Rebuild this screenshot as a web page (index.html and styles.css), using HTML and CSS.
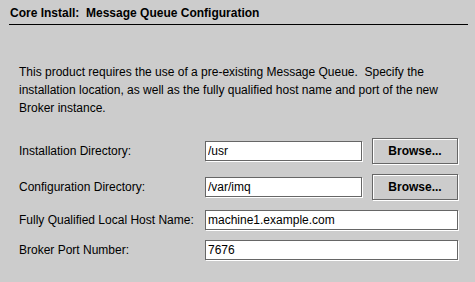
FILE: index.html
```html
<!DOCTYPE html>
<html lang="en">
<head>
  <meta charset="UTF-8" />
  <title>Core Install: Message Queue Configuration</title>
  <link rel="stylesheet" href="styles.css">
</head>
<body>
  <div class="panel">
    <h2 class="panel-title">Core Install:&nbsp; Message Queue Configuration</h2>

    <p class="intro">This product requires the use of a pre-existing Message Queue.&nbsp; Specify the installation location, as well as the fully qualified host name and port of the new Broker instance.</p>

    <div class="form">
      <label class="field-label" for="install-dir">Installation Directory:</label>
      <input class="field" type="text" id="install-dir" value="/usr" />
      <button class="browse">Browse...</button>

      <label class="field-label" for="config-dir">Configuration Directory:</label>
      <input class="field" type="text" id="config-dir" value="/var/imq" />
      <button class="browse">Browse...</button>

      <label class="field-label" for="host-name">Fully Qualified Local Host Name:</label>
      <input class="field wide" type="text" id="host-name" value="machine1.example.com" />

      <label class="field-label" for="broker-port">Broker Port Number:</label>
      <input class="field wide" type="text" id="broker-port" value="7676" />
    </div>
  </div>
</body>
</html>
```

FILE: styles.css
```css
body {
  margin: 0;
  background: #cccccc;
  font-family: 'Liberation Sans', Arial, sans-serif;
  font-size: 12px;
  color: #000;
}
.panel {
  width: 475px;
  height: 282px;
  overflow: hidden;
}
.panel-title {
  margin: 0 7px 0 9px;
  padding: 6px 0 4px 1px;
  font-size: 12px;
  line-height: 14px;
  font-weight: bold;
  border-bottom: 1px solid #000;
}
.intro {
  margin: 38px 16px 0 19px;
  line-height: 18px;
}
.form {
  display: grid;
  grid-template-columns: 176px 157px 86px;
  column-gap: 10px;
  row-gap: 10px;
  align-items: center;
  margin: 21px 0 0 19px;
}
.field-label {
  line-height: 15px;
}
.field {
  box-sizing: border-box;
  width: 100%;
  height: 20px;
  margin: 0;
  padding: 0 2px;
  border: 1px solid #666;
  box-shadow: 1px 1px 0 #fff;
  background: #fff;
  font-family: 'Liberation Sans', Arial, sans-serif;
  font-size: 12px;
  color: #000;
  outline: none;
}
.field.wide {
  grid-column: 2 / 4;
}
.browse {
  box-sizing: border-box;
  height: 26px;
  margin: 0;
  padding: 0;
  border: 1px solid #666;
  box-shadow: inset 1px 1px 0 #fff, 1px 1px 0 #fff;
  background: #cccccc;
  font-family: 'Liberation Sans', Arial, sans-serif;
  font-size: 12px;
  font-weight: bold;
  color: #000;
}
```
